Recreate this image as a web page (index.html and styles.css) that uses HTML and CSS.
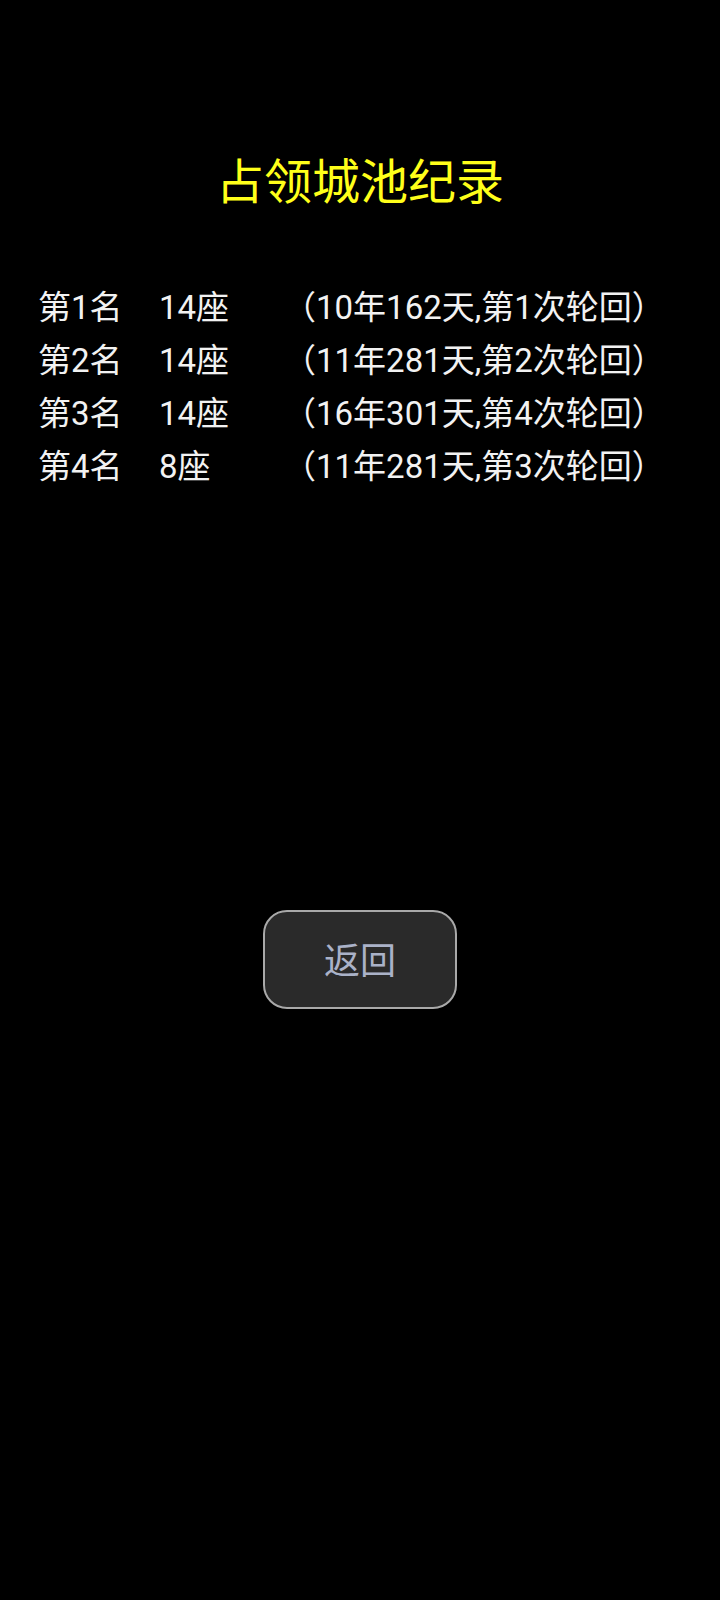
FILE: index.html
```html
<!DOCTYPE html>
<html lang="zh">
<head>
<meta charset="utf-8">
<title>占领城池纪录</title>
<link rel="stylesheet" href="styles.css">
</head>
<body>
<main class="page">
  <h1 class="title">占领城池纪录</h1>
  <ul class="records">
    <li class="row"><span class="rank">第1名</span><span class="count">14座</span><span class="detail">（10年162天,第1次轮回）</span></li>
    <li class="row"><span class="rank">第2名</span><span class="count">14座</span><span class="detail">（11年281天,第2次轮回）</span></li>
    <li class="row"><span class="rank">第3名</span><span class="count">14座</span><span class="detail">（16年301天,第4次轮回）</span></li>
    <li class="row"><span class="rank">第4名</span><span class="count">8座</span><span class="detail">（11年281天,第3次轮回）</span></li>
  </ul>
  <div class="actions">
    <button class="back" type="button">返回</button>
  </div>
</main>
</body>
</html>
```
FILE: styles.css
```css
html, body {
  margin: 0;
  padding: 0;
  background: #000;
}
body {
  width: 720px;
  height: 1600px;
  font-family: Roboto, "Noto Sans CJK SC", sans-serif;
  color: #f2f2f2;
}
.page {
  display: flex;
  flex-direction: column;
  padding-top: 151px;
}
.title {
  margin: 0;
  text-align: center;
  font-size: 48px;
  font-weight: 400;
  line-height: 64px;
  color: #ffff1a;
  padding-left: 0;
}
.records {
  list-style: none;
  margin: 66px 0 0 0;
  padding: 0 0 0 38px;
  display: flex;
  flex-direction: column;
}
.row {
  display: grid;
  grid-template-columns: 121px 124px auto;
  font-size: 33px;
  line-height: 53px;
  height: 53px;
  white-space: nowrap;
}
.actions {
  display: flex;
  justify-content: center;
  margin-top: 417px;
  padding-left: 0;
}
.back {
  width: 194px;
  height: 99px;
  border: 2px solid #a9a9a9;
  border-radius: 24px;
  background: #2a2a2a;
  color: #aab2c8;
  font-family: Roboto, "Noto Sans CJK SC", sans-serif;
  font-size: 36px;
  padding: 0 0 4px 0;
}
```
